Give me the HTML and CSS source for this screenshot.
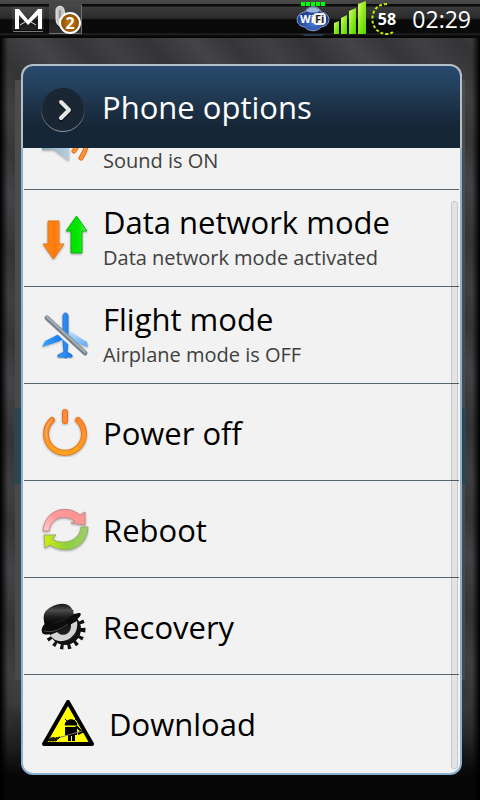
FILE: index.html
```html
<!DOCTYPE html>
<html lang="en">
<head>
    <meta charset="UTF-8">
    <meta name="viewport" content="width=device-width, initial-scale=1.0">
    <title>Phone options</title>
    <link rel="stylesheet" href="styles.css">
</head>
<body>

    <div class="screen">
        <header class="status-bar">
            <div class="status-left">
                <svg width="32" height="28" viewBox="0 0 32 28">
                    <defs>
                        <linearGradient id="tile" x1="0" y1="0" x2="0" y2="1"><stop offset="0" stop-color="#4a4a4a"/><stop offset=".5" stop-color="#383838"/><stop offset=".55" stop-color="#181818"/><stop offset="1" stop-color="#222"/></linearGradient>
                    </defs>
                    <rect y="2" width="32" height="23" fill="url(#tile)"/>
                    <path d="M1 26.500h30" stroke="#777"/>
                    <path d="M3 4h4l9 11 10-11h4v20h-4V10L16 20 7 10v14H3z" fill="#fff"/>
                    <path d="M8 20l5-3M24 20l-5-3" stroke="#ddd" stroke-width="1"/>
                </svg>
                <svg width="34" height="32" viewBox="0 0 34 32">
                    <defs>
                        <linearGradient id="tile2" x1="0" y1="0" x2="0" y2="1"><stop offset="0" stop-color="#484848"/><stop offset=".5" stop-color="#3c3c3c"/><stop offset=".55" stop-color="#202020"/><stop offset="1" stop-color="#2c2c2c"/></linearGradient>
                        <radialGradient id="badge"><stop offset="0" stop-color="#c77a08"/><stop offset="1" stop-color="#8a4d00"/></radialGradient>
                    </defs>
                    <rect y="1" width="33" height="29" fill="url(#tile2)"/>
                    <path d="M0 30.500h33M32.500 2v28" stroke="#707070" fill="none"/>
                    <path d="M7 7c0-5 8-5 8 0l1 6-4 10c-4 0-5-4-5-8z" fill="#c8c8c8" stroke="#eee" stroke-width="1"/>
                    <path d="M11 7v8" stroke="#999" stroke-width="2"/>
                    <circle cx="21" cy="20" r="10" fill="url(#badge)" stroke="#fff" stroke-width="2"/>
                    <text x="21" y="26" class="badge-text">2</text>
                </svg>
            </div>
            <div class="status-right">
                <svg width="34" height="36" viewBox="0 0 34 36">
                    <defs>
                        <radialGradient id="wifi" cx=".5" cy=".7" r=".6"><stop offset="0" stop-color="#4377d8"/><stop offset="1" stop-color="#17357f"/></radialGradient>
                    </defs>
                    <path d="M5 1h4v4H5zM10 1h4v4h-4zM15 1h4v4h-4zM20 1h4v4h-4zM25 1h4v4h-4z" fill="#0f0"/>
                    <path d="M9 11C12 4 23 4 25 11c10 1 11 14 0 15-3 5-13 5-16 0-11-1-10-14 0-15z" fill="url(#wifi)" stroke="#8b9cc0" stroke-width="1"/>
                    <path d="M10 10c3-5 11-5 14 0-3 2-11 2-14 0z" fill="#9db3dc"/>
                    <rect x="17" y="12" width="13" height="12" rx="4" fill="#f4f4f4"/>
                    <text x="4" y="22" class="wifi-text" fill="#fff">Wi</text>
                    <text x="19" y="22" class="wifi-text" fill="#222">Fi</text>
                    <path d="M4 33h26l-5 2H9z" fill="#2c3953"/>
                </svg>
                <svg width="34" height="36" viewBox="0 0 34 36">
                    <defs>
                        <linearGradient id="bars" x1="0" x2="1" y2="1"><stop offset="0" stop-color="#dcff70"/><stop offset=".5" stop-color="#8fe81c"/><stop offset="1" stop-color="#4bd400"/></linearGradient>
                    </defs>
                    <g fill="url(#bars)">
                        <path d="M1 22l5-2v13H1z"/>
                        <path d="M8 17l6-3v19H8z"/>
                        <path d="M16 10l7-3v26h-7z"/>
                        <path d="M25 3l8-3v33h-8z"/>
                    </g>
                </svg>
                <svg width="34" height="36" viewBox="0 0 34 36">
                    <path d="M17 3C-3 3-2 33 17 33q4 0 7-3" fill="none" stroke="#c0f000" stroke-width="2" stroke-dasharray="3 2"/>
                    <text x="17" y="24" class="battery-text">58</text>
                </svg>
                <time class="clock">02:29</time>
            </div>
        </header>

        <main class="dialog">
            <div class="dialog-header">
                <svg class="chevron" width="46" height="46" viewBox="0 0 46 46">
                    <defs>
                        <linearGradient id="rim" x1="0" y1="0" x2="0" y2="1"><stop offset="0" stop-color="#132230"/><stop offset=".5" stop-color="#2c3b48"/><stop offset="1" stop-color="#8f9aa4"/></linearGradient>
                    </defs>
                    <circle cx="23" cy="23" r="21.500" fill="#1a2733" stroke="url(#rim)"/>
                    <path d="M21 16l8 8-8 8" fill="none" stroke="#000" stroke-opacity=".5" stroke-width="5" stroke-linecap="round"/>
                    <path d="M21 15l8 8-8 8" fill="none" stroke="#e4e4e4" stroke-width="4" stroke-linecap="round" stroke-linejoin="round"/>
                </svg>
                <h1>Phone options</h1>
            </div>

            <div class="list-area">
                <ul class="option-list">
                    <li>
                        <button class="option" type="button">
                            <svg width="48" height="48" viewBox="0 0 48 48">
                                <defs>
                                    <linearGradient id="speaker" x1="0" x2="1"><stop offset="0" stop-color="#8fa9ba"/><stop offset="1" stop-color="#b9cedb"/></linearGradient>
                                </defs>
                                <path d="M1 17h12L28 3v41L13 33H1z" fill="url(#speaker)" class="shadow"/>
                                <path d="M33 14c4 7 5 14 0 20M42 9c6 10 5 22-2 32" fill="none" stroke="#e0701c" stroke-width="5" stroke-linecap="round"/>
                                <path d="M33 14c4 7 5 14 0 20M42 9c6 10 5 22-2 32" fill="none" stroke="#ff9436" stroke-width="3" stroke-linecap="round"/>
                            </svg>
                            <span class="option-text">
                                <span class="option-note">Sound is ON</span>
                            </span>
                        </button>
                    </li>
                    <li>
                        <button class="option" type="button">
                            <svg width="48" height="48" viewBox="0 0 48 48">
                                <defs>
                                    <linearGradient id="down" x1="0" x2="1"><stop offset="0" stop-color="#ff8a1a"/><stop offset=".6" stop-color="#ff7a08"/><stop offset="1" stop-color="#ffa34a"/></linearGradient>
                                    <linearGradient id="up" x1="0" x2="1"><stop offset="0" stop-color="#08d808"/><stop offset=".6" stop-color="#00e800"/><stop offset="1" stop-color="#5af75a"/></linearGradient>
                                </defs>
                                <path d="M7 7h11v23h5L12.500 45 2 30h5z" fill="url(#down)" stroke="#e0771a" stroke-width="1" class="shadow"/>
                                <path d="M30 39V17h-5L35.500 2 46 17h-5v22z" fill="url(#up)" stroke="#10b410" stroke-width="1" class="shadow"/>
                            </svg>
                            <span class="option-text">
                                <span class="option-title">Data network mode</span>
                                <span class="option-note">Data network mode activated</span>
                            </span>
                        </button>
                    </li>
                    <li>
                        <button class="option" type="button">
                            <svg width="48" height="48" viewBox="0 0 48 48">
                                <defs>
                                    <linearGradient id="plane" x1="0" x2="1"><stop offset="0" stop-color="#3aa2ff"/><stop offset="1" stop-color="#1674e8"/></linearGradient>
                                    <linearGradient id="wing" x1="0" x2="1" y2="1"><stop offset="0" stop-color="#c4e2ff"/><stop offset="1" stop-color="#5faaf5"/></linearGradient>
                                </defs>
                                <g class="shadow">
                                    <path d="M26 19l20 12 1 5-20-7z" fill="url(#wing)"/>
                                    <path d="M22 5c0-4 5-4 5 0v26l-1 10 5 3v2h-5l-1 1h-1l-1-1h-6v-2l6-3-1-10z" fill="url(#plane)" stroke="#2878d8" stroke-width="1"/>
                                    <path d="M18 23L4 30l-3 6 18-6 5-4z" fill="url(#plane)"/>
                                </g>
                                <path d="M8 11l34 31" stroke="#f2f2f2" stroke-width="7"/>
                                <path d="M6 7l38 35" stroke="#77838c" stroke-width="5" stroke-linecap="round"/>
                                <path d="M6 6l38 35" stroke="#a6afb6" stroke-width="2" stroke-linecap="round"/>
                            </svg>
                            <span class="option-text">
                                <span class="option-title">Flight mode</span>
                                <span class="option-note">Airplane mode is OFF</span>
                            </span>
                        </button>
                    </li>
                    <li>
                        <button class="option option-single" type="button">
                            <svg width="48" height="48" viewBox="0 0 48 48">
                                <defs>
                                    <linearGradient id="power" x1="0" y1="0" x2="0" y2="1"><stop offset="0" stop-color="#ff8530"/><stop offset="1" stop-color="#ffa51e"/></linearGradient>
                                </defs>
                                <g class="shadow" fill="none" stroke-linecap="round">
                                    <path d="M11 11A19 19 0 1 0 37 11" stroke="#e8791c" stroke-width="6"/>
                                    <path d="M11 11A19 19 0 1 0 37 11" stroke="url(#power)" stroke-width="4"/>
                                    <path d="M11 10A19 19 0 0 0 6 30" stroke="#ffb37a" stroke-width="1"/>
                                    <path d="M24 3v9" stroke="#e8701c" stroke-width="6"/>
                                    <path d="M24 3v9" stroke="#ff8b38" stroke-width="4"/>
                                </g>
                            </svg>
                            <span class="option-title">Power off</span>
                        </button>
                    </li>
                    <li>
                        <button class="option option-single" type="button">
                            <svg width="48" height="48" viewBox="0 0 48 48">
                                <defs>
                                    <linearGradient id="red" x1="0" y1="1" x2="1" y2="0"><stop offset="0" stop-color="#ffd0d0"/><stop offset=".5" stop-color="#ff9a9a"/><stop offset="1" stop-color="#ff9090"/></linearGradient>
                                    <linearGradient id="green" x1="0" x2="1"><stop offset="0" stop-color="#d4ec10"/><stop offset=".5" stop-color="#8fd03a"/><stop offset="1" stop-color="#9ccf70"/></linearGradient>
                                </defs>
                                <path d="M2 25C4 3 26-2 39 9l5-3v13l-14-2 4-2C24 8 10 11 8 25z" fill="url(#red)" stroke="#c98888" stroke-width="1" class="shadow"/>
                                <path d="M47 21c-1 22-22 28-38 18l-5 3-1-13h12l-4 4c11 7 28 2 29-12z" fill="url(#green)" stroke="#9cac70" stroke-width="1" class="shadow"/>
                            </svg>
                            <span class="option-title">Reboot</span>
                        </button>
                    </li>
                    <li>
                        <button class="option option-single" type="button">
                            <svg width="48" height="48" viewBox="0 0 48 48">
                                <defs>
                                    <linearGradient id="hat" x1="0" y1="0" x2="0" y2="1"><stop offset="0" stop-color="#161616"/><stop offset=".3" stop-color="#4c4c4c"/><stop offset=".6" stop-color="#1c1c1c"/><stop offset="1" stop-color="#000"/></linearGradient>
                                </defs>
                                <circle cx="24" cy="26" r="17" fill="none" stroke="#111" stroke-width="7" stroke-dasharray="3 4"/>
                                <circle cx="24" cy="26" r="14" fill="#1c1c1c" stroke="#111" stroke-width="4"/>
                                <path d="M9 32c8 13 30 4 27-14l-6 3c1 10-8 14-14 8z" fill="#d4d4d4"/>
                                <path d="M4 23C1 12 3 8 10 4 22-2 31 0 33 12z" fill="url(#hat)"/>
                                <path d="M4 21c9 1 22-3 29-10l5-1c5 0-1 8-16 16C13 31 2 34 1 29c-1-3 1-7 3-8z" fill="#0c0c0c"/>
                                <path d="M3 28c8 2 16-1 24-7" fill="none" stroke="#4a4a4a" stroke-width="1"/>
                            </svg>
                            <span class="option-title">Recovery</span>
                        </button>
                    </li>
                    <li>
                        <button class="option option-single" type="button">
                            <svg width="54" height="48" viewBox="0 0 54 48">
                                <path d="M27 2L51 44H3z" fill="#ff0" stroke="#000" stroke-width="4" stroke-linejoin="round"/>
                                <path d="M24 25c1-7 11-7 12 0zM24 19l2 2M35 19l-2 2" fill="#000" stroke="#000" stroke-width="1"/>
                                <path d="M24 27h12v8h-2v6h-3v-5h-1v5h-3v-6h-3z" fill="#000"/>
                                <path d="M35 26l6 6-4 2" fill="none" stroke="#000" stroke-width="2"/>
                                <path d="M17 38l24-7" stroke="#777" stroke-width="1"/>
                                <path d="M7 41c2-4 5-4 7-3l5-1-4 4z" fill="#221" stroke="#000" stroke-dasharray="2 1"/>
                            </svg>
                            <span class="option-title">Download</span>
                        </button>
                    </li>
                </ul>
                <div class="scroll-thumb"></div>
            </div>
        </main>
    </div>

</body>
</html>
```
FILE: styles.css
```css
:root {
    --surface-color: #f2f2f2;
    --divider-color: #56646e;
    --text-color: #000000;
    --note-color: #404040;
    --frame-top: #b4bec8;
    --frame-bottom: #8cb0d4;
}

* {
    box-sizing: border-box;
}

body {
    margin: 0;
    font-family: "Open Sans", "Noto Sans", sans-serif;
    color: var(--text-color);
    background-color: #000;
}

.screen {
    display: flex;
    flex-direction: column;
    height: 100vh;
    background:
        linear-gradient(to right, #000 0, transparent 8px, transparent calc(100% - 8px), #000 100%),
        linear-gradient(to bottom, transparent 88%, #060606 97%),
        linear-gradient(#2a474f, #2a474f) 14px 408px / calc(100% - 28px) 76px no-repeat,
        linear-gradient(#4c4c4c, #484848) 15px 80px / calc(100% - 30px) 600px no-repeat,
        repeating-linear-gradient(50deg, #343436 0, #444448 36px, #363638 64px, #404043 90px, #343436 120px);
}

/* Status bar */
.status-bar {
    display: flex;
    justify-content: space-between;
    align-items: center;
    height: 38px;
    flex-shrink: 0;
    padding: 0 9px 0 12px;
    background: linear-gradient(to bottom, #4a4a4a 0, #444 4px, #0c0c0c 4px, #0c0c0c 6px, #3a3a3a 7px, #2c2c2c 18px, #0a0a0a 20px, #0a0a0a 33px, #262626 34px, #060606 36px, #060606 38px);
}
.status-left, .status-right {
    display: flex;
    align-items: center;
    gap: 5px;
}
.status-right { gap: 3px; }
.badge-text {
    font-size: 16px;
    font-weight: 700;
    text-anchor: middle;
    fill: #fff;
}
.wifi-text {
    font-size: 11px;
    font-weight: 700;
}
.battery-text {
    font-size: 16px;
    font-weight: 700;
    text-anchor: middle;
    fill: #fff;
}
.clock {
    margin-left: 5px;
    font-size: 23px;
    color: #fff;
}

/* Dialog */
.dialog {
    display: flex;
    flex-direction: column;
    flex: 1;
    min-height: 0;
    margin: 26px 18px 25px 21px;
    padding: 2px;
    border-radius: 12px;
    background: linear-gradient(to bottom, var(--frame-top) 84px, var(--frame-bottom) 84px);
}
.dialog-header {
    display: flex;
    align-items: center;
    gap: 16px;
    height: 82px;
    flex-shrink: 0;
    padding: 0 17px;
    border-radius: 10px 10px 0 0;
    background: linear-gradient(to bottom, #264a6e 0, #24405c 25%, #1a2c40 60%, #152736 75%);
}
.chevron { margin-top: 6px; }
.dialog-header h1 {
    margin: 0;
    font-size: 31px;
    line-height: 40px;
    font-weight: 400;
    color: #fff;
}

/* Options */
.list-area {
    position: relative;
    display: flex;
    flex-direction: column;
    justify-content: flex-end;
    flex: 1;
    min-height: 0;
    overflow: hidden;
    border-radius: 0 0 10px 10px;
    background: var(--surface-color);
}
.option-list {
    list-style: none;
    margin: 0;
    padding: 0 1px 2px;
}
.option-list li { border-bottom: 1px solid var(--divider-color); }
.option-list li:last-child { border-bottom: none; }
.option {
    display: flex;
    align-items: center;
    gap: 14px;
    width: 100%;
    height: 96px;
    padding: 0 17px;
    border: none;
    background: none;
    font: inherit;
    color: inherit;
    text-align: left;
    cursor: pointer;
}
.option-single { padding-top: 2px; }
.option svg { flex-shrink: 0; }
.option-text {
    display: flex;
    flex-direction: column;
    justify-content: flex-end;
    gap: 2px;
    min-height: 72px;
    padding-bottom: 2px;
}
.option-title {
    font-size: 31px;
    line-height: 40px;
}
.option-note {
    font-size: 20px;
    line-height: 28px;
    color: var(--note-color);
}
.shadow { filter: drop-shadow(0 1px 1px rgba(0, 0, 0, 0.3)); }
.scroll-thumb {
    position: absolute;
    top: 53px;
    right: 2px;
    bottom: 4px;
    width: 7px;
    border: 1px solid rgba(0, 0, 0, 0.12);
    border-radius: 4px;
    background: rgba(0, 0, 0, 0.06);
}
```
